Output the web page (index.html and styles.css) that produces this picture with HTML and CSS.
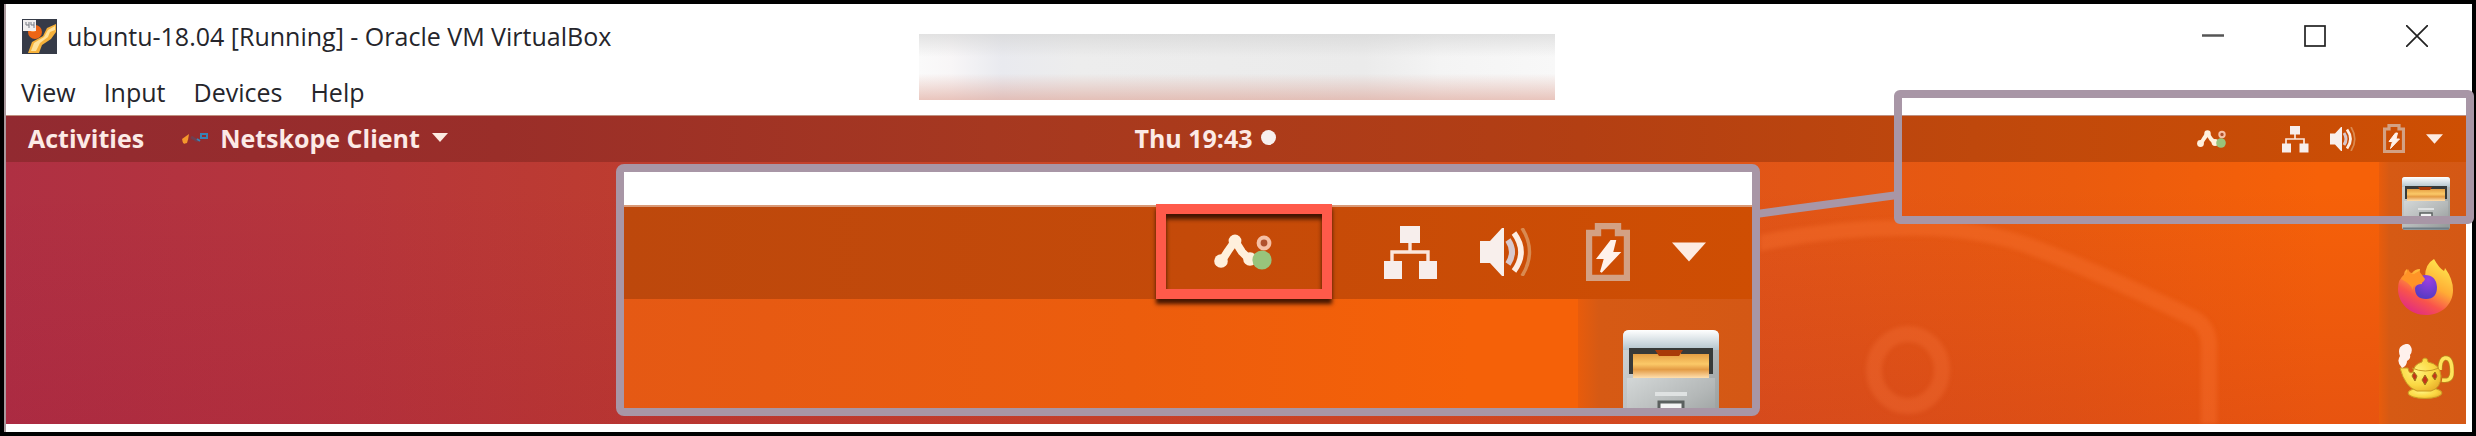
FILE: index.html
```html
<!DOCTYPE html>
<html lang="en">
<head>
<meta charset="utf-8">
<title>ubuntu-18.04 [Running] - Oracle VM VirtualBox</title>
<link rel="stylesheet" href="styles.css">
</head>
<body>
<svg class="defs" aria-hidden="true">
  <defs>
    <linearGradient id="metal" x1="0" y1="0" x2="1" y2="1">
      <stop offset="0" stop-color="#d3d7d7"/><stop offset=".55" stop-color="#b4b8b8"/><stop offset="1" stop-color="#929897"/>
    </linearGradient>
    <linearGradient id="lid" x1="0" y1="0" x2="0" y2="1">
      <stop offset="0" stop-color="#ffffff"/><stop offset="1" stop-color="#b3c4cc"/>
    </linearGradient>
    <linearGradient id="folder" x1="0" y1="0" x2="0" y2="1">
      <stop offset="0" stop-color="#dc8e35"/><stop offset=".5" stop-color="#fbc968"/><stop offset=".7" stop-color="#e39b45"/><stop offset="1" stop-color="#ffe0b0"/>
    </linearGradient>
    <linearGradient id="fox" x1=".8" y1=".1" x2=".3" y2="1">
      <stop offset="0" stop-color="#ffe04a"/><stop offset=".4" stop-color="#ffac35"/><stop offset=".7" stop-color="#f9544b"/><stop offset="1" stop-color="#e02b84"/>
    </linearGradient>
    <radialGradient id="globe" cx=".6" cy=".2" r=".8">
      <stop offset="0" stop-color="#9a3fe0"/><stop offset="1" stop-color="#563bc4"/>
    </radialGradient>
    <radialGradient id="gold" cx=".4" cy=".4" r=".7">
      <stop offset="0" stop-color="#fff27a"/><stop offset=".6" stop-color="#fbd843"/><stop offset="1" stop-color="#e9b02b"/>
    </radialGradient>
  </defs>
  <symbol id="i-client" viewBox="0 0 29 18">
    <path d="M3.500 14L7 8.500 10.500 3.500 14 9 18 13" fill="none" stroke="#fff0dc" stroke-width="4" stroke-linejoin="round" stroke-linecap="round"/>
    <circle cx="3.500" cy="13.500" r="3.400" fill="#fff0dc"/><circle cx="10.500" cy="3.500" r="3.200" fill="#fff0dc"/><circle cx="18" cy="12.500" r="3.400" fill="#fff0dc"/>
    <circle cx="25" cy="4.500" r="2.700" fill="#b0502c" stroke="#f6bfa4" stroke-width="2"/>
    <circle cx="24" cy="13" r="4.800" fill="#98c47c"/>
  </symbol>
  <symbol id="i-network" viewBox="0 0 28 28">
    <path d="M14 9v5M5 19v-5h18v5" fill="none" stroke="#fbe6dc" stroke-width="1.700"/>
    <path d="M9 1h10v8.500H9zM1 18.500h9v9H1zM18.500 18.500h9v9h-9z" fill="#f7eeec"/>
  </symbol>
  <symbol id="i-sound" viewBox="0 0 26 24">
    <path d="M0 6.500h5L11 0h1v24h-1l-6-6.500H0z" fill="#f8efec"/>
    <path d="M14 6q4 6 0 12" fill="none" stroke="#d8c8cc" stroke-width="3"/>
    <path d="M17 2.500q7 9.500 0 19" fill="none" stroke="#fdeee4" stroke-width="2.800"/>
    <path d="M21 0q7.500 12 0 24" fill="none" stroke="#d98a50" stroke-width="1.700"/>
  </symbol>
  <symbol id="i-battery" viewBox="0 0 22 29">
    <path d="M1.500 27.500V5H6V1.500h10V5h4.500v22.500z" fill="none" stroke="#d3a184" stroke-width="3.200"/>
    <path d="M12.500 9L6 17.500h3.500L7.500 24.500l9-9.500h-3.500L14.500 9z" fill="#fff1ea" stroke="#fff1ea"/>
  </symbol>
  <symbol id="i-caret" viewBox="0 0 18 10">
    <path d="M0 0h18L9 10z" fill="#fdebe2"/>
  </symbol>
  <symbol id="i-files" viewBox="0 0 48 53">
    <rect width="48" height="53" rx="3" fill="url(#metal)"/>
    <path d="M3 0h42q3 0 3 3v7H0V3q0-3 3-3z" fill="url(#lid)"/>
    <rect x="3" y="9" width="42" height="13" fill="#383a38"/>
    <path d="M5 12h13v-2h11v2h14v12H5z" fill="url(#folder)"/>
    <path d="M16 10h14l-2 3H18z" fill="#a83a08"/>
    <path d="M2 24h44v27H2z" fill="url(#metal)"/>
    <path d="M16 32h16" stroke="#dfe2e2" stroke-width="2"/>
    <rect x="18" y="36" width="12" height="8" fill="#f4f4f4" stroke="#5b605f" stroke-width="1.500"/>
    <path d="M1 51.500h46" stroke="#6f7d86" stroke-width="2"/>
  </symbol>
</svg>

<main class="window">
  <header class="titlebar">
    <svg class="app-logo" viewBox="0 0 35 35" aria-hidden="true">
      <rect width="35" height="35" fill="#363b48"/>
      <circle cx="13" cy="13" r="7" fill="#ec6515"/><circle cx="11" cy="10" r="3" fill="#ff9a4a"/>
      <path d="M34 5L25 9 21 17 10 23 6 34H17L20 26 29 20 34 13z" fill="#f6b13a"/>
      <path d="M33 7L26 11 22 18 12 24 9 32H14L18 24 26 18 28 13 33 11z" fill="#ffe19a"/>
      <rect x="1" y="1" width="13" height="11" fill="#f0eeee"/>
      <path d="M4 3v3h3M7 3v6M9 3v3h3M12 3v6" fill="none" stroke="#777b83"/>
    </svg>
    <h1 class="title">ubuntu-18.04 [Running] - Oracle VM VirtualBox</h1>
    <div class="window-controls">
      <button type="button" aria-label="Minimize"><svg viewBox="0 0 22 22"><path d="M0 10.500h22" stroke="#555" stroke-width="2.500"/></svg></button>
      <button type="button" aria-label="Maximize"><svg viewBox="0 0 22 22"><rect x="1" y="1" width="20" height="20" fill="none" stroke="#222" stroke-width="1.700"/></svg></button>
      <button type="button" aria-label="Close"><svg viewBox="0 0 22 22"><path d="M0 0l22 22M22 0L0 22" stroke="#222" stroke-width="1.700"/></svg></button>
    </div>
    <div class="redacted"></div>
  </header>

  <nav class="menubar">
    <button type="button">View</button>
    <button type="button">Input</button>
    <button type="button">Devices</button>
    <button type="button">Help</button>
  </nav>

  <section class="screen">
    <div class="panel">
      <div class="panel-left">
        <button type="button">Activities</button>
        <button type="button" class="app-menu">
          <svg class="app-icon" viewBox="0 0 26 12" aria-hidden="true"><path d="M0 7l7-5-1 6-4 4z" fill="#f5972c"/><circle cx="3" cy="9" r="2.500" fill="#f5972c"/><path d="M9 5l7 4" stroke="#713f50" stroke-width="3"/><path d="M15 7l3 2M19 2h6v4h-6z" fill="none" stroke="#3a83b4" stroke-width="2"/></svg>
          Netskope Client
          <svg class="app-caret" viewBox="0 0 18 10" aria-hidden="true"><use href="#i-caret"/></svg>
        </button>
      </div>
      <button type="button" class="clock">Thu 19:43<span class="dot"></span></button>
      <div class="tray">
        <button type="button" class="client" aria-label="Netskope Client"><svg><use href="#i-client"/></svg></button>
        <button type="button" class="network" aria-label="Network"><svg><use href="#i-network"/></svg></button>
        <button type="button" class="sound" aria-label="Volume"><svg><use href="#i-sound"/></svg></button>
        <button type="button" class="battery" aria-label="Battery"><svg><use href="#i-battery"/></svg></button>
        <button type="button" class="caret" aria-label="System menu"><svg><use href="#i-caret"/></svg></button>
      </div>
    </div>

    <div class="desktop">
      <svg class="wallpaper" viewBox="0 0 706 262" aria-hidden="true">
        <path d="M-4 82Q70 66 140 66Q220 64 280 88Q350 115 435 157Q449 166 449 184V270" fill="none" stroke="#fb7433" stroke-opacity=".38" stroke-width="16"/>
        <ellipse cx="148" cy="208" rx="34" ry="36" fill="none" stroke="#fb7a40" stroke-opacity=".28" stroke-width="16"/>
      </svg>
      <nav class="dock">
        <button type="button" aria-label="Files"><svg class="files"><use href="#i-files"/></svg></button>
        <button type="button" aria-label="Firefox">
          <svg class="dock-icon" viewBox="0 0 56 56">
            <path d="M36 0q5 9 10 12 1-2 1-3 8 11 8 22C55 46 43 56 28 56S0 45 0 30q0-10 6-14 0-4 3-6 1 4 5 4 3-4 8-4l-1 7 6 1q0-13 9-18z" fill="url(#fox)"/>
            <path d="M27 16q11 0 12 12 0 12-11 12T17 29q1-4 7-4 0-5-4-6 3-3 7-3z" fill="url(#globe)"/>
            <path d="M3 20q2-4 5-5l2-5q2 5 6 5l5-3 6 8q-1 4-7 5-6 1-5 6-2-6-12-11z" fill="#ff9427"/>
          </svg>
        </button>
        <button type="button" aria-label="Genie lamp">
          <svg class="dock-icon" viewBox="0 0 56 56">
            <path d="M44 36q10 2 10-8 0-15-7-14-5 1-5 12" fill="none" stroke="#b88a1d" stroke-width="5"/>
            <path d="M44 36q10 2 10-8 0-15-7-14-5 1-5 12" fill="none" stroke="#ffe45c" stroke-width="3.500"/>
            <ellipse cx="27" cy="49" rx="17" ry="5.500" fill="url(#gold)" stroke="#c99a25"/>
            <path d="M2 24l8 0q1 7 5 4 1-8 9-10 0-4 3-4t3 4q12 2 13 14 0 12-10 15H19Q7 43 2 24z" fill="url(#gold)" stroke="#c99a25"/>
            <path d="M14 24q13 6 27 0" fill="none" stroke="#c99a25"/>
            <path d="M16 28l3 4-2 5-3-5zM27 31l3 5-3 5-3-5zM37 28l2 4-2 4-3-4z" fill="#c6331a" stroke="#9d7719"/>
            <path d="M4 24Q-2 18 2 12-1 4 5 1q6-3 8 2 2 4-1 8 1 4-3 6 0 5-5 7z" fill="#fff1ec"/>
          </svg>
        </button>
      </nav>
    </div>
  </section>

  <svg class="connector" viewBox="0 0 134 36" aria-hidden="true"><path d="M-4 28L138 9" stroke="#a896a6" stroke-width="8"/></svg>
  <div class="source-frame"></div>

  <aside class="magnifier" aria-label="Enlarged system tray">
    <div class="panel">
      <div class="tray">
        <button type="button" class="client highlighted" aria-label="Netskope Client"><svg><use href="#i-client"/></svg></button>
        <button type="button" class="network" aria-label="Network"><svg><use href="#i-network"/></svg></button>
        <button type="button" class="sound" aria-label="Volume"><svg><use href="#i-sound"/></svg></button>
        <button type="button" class="battery" aria-label="Battery"><svg><use href="#i-battery"/></svg></button>
        <button type="button" class="caret" aria-label="System menu"><svg><use href="#i-caret"/></svg></button>
      </div>
    </div>
    <div class="magnified-desktop">
      <div class="dock"><button type="button" aria-label="Files"><svg class="files"><use href="#i-files"/></svg></button></div>
    </div>
  </aside>
</main>
</body>
</html>
```
FILE: styles.css
```css
:root {
  --u: 1px;
  --frame: #a896a6;
}

* {
  box-sizing: border-box;
}

body {
  margin: 0;
  padding: 4px;
  min-height: 100vh;
  display: flex;
  background: #000;
  font-family: "Open Sans", "Noto Sans", sans-serif;
  color: #25252b;
}

button {
  margin: 0;
  padding: 0;
  border: 0;
  background: none;
  color: inherit;
  font: inherit;
}

svg {
  display: block;
}

.defs {
  position: absolute;
  width: 0;
  height: 0;
}

.window {
  position: relative;
  flex: 1;
  display: flex;
  flex-direction: column;
  padding: 0 6px 8px 0;
  background: #fff;
  border-left: 2px solid #a9989c;
}

.titlebar {
  position: relative;
  display: flex;
  align-items: center;
  height: 78px;
  padding: 0 38px 14px 16px;
}

.app-logo {
  width: 35px;
  height: 35px;
}

.title {
  margin: 0 0 0 10px;
  font-size: 25px;
  font-weight: 400;
  line-height: 36px;
  white-space: nowrap;
}

.window-controls {
  display: flex;
  gap: 80px;
  margin-left: auto;
}

.window-controls svg {
  width: 22px;
  height: 22px;
}

.redacted {
  position: absolute;
  top: 30px;
  left: calc(50% - 318px);
  margin-left: 1px;
  width: 636px;
  height: 66px;
  background:
    linear-gradient(to bottom, rgba(210, 210, 210, .6), rgba(235, 235, 235, 0) 35%, rgba(225, 170, 155, 0) 60%, rgba(220, 155, 140, .55)),
    linear-gradient(to right, #fafafa, #f8f6f7 5%, #e9eaef 13%, #ededed 25%, #ebebeb 70%, #f4f4f4 82%, #f8f8f8);
}

.menubar {
  display: flex;
  gap: 28px;
  height: 33px;
  padding-left: 15px;
  font-size: 25px;
  line-height: 20px;
}

.menubar button {
  height: 20px;
}

.screen {
  flex: 1;
  display: flex;
  flex-direction: column;
}

.panel {
  display: grid;
  grid-template-columns: 1fr auto 1fr;
  align-items: center;
  height: calc(var(--u) * 47);
  background: linear-gradient(to right, #922a31, #9a2e29 20%, #a63820 40%, #b33f13 64%, #bf480c 80%, #ce4f03);
  box-shadow: inset 0 1px #c09080;
  color: #fceae6;
  font-size: 25px;
  font-weight: 700;
  line-height: 32px;
}

.panel-left {
  display: flex;
  gap: 38px;
  padding: 0 0 2px 22px;
}

.app-menu {
  display: flex;
  align-items: center;
  gap: 12px;
}

.app-icon {
  width: 26px;
  height: 12px;
}

.app-caret {
  width: 16px;
  height: 9px;
}

.clock {
  display: flex;
  align-items: center;
  gap: 8px;
  padding: 0 62px 2px 0;
}

.dot {
  width: 15px;
  height: 15px;
  border-radius: 50%;
  background: #f7f0ee;
}

.tray {
  display: flex;
  align-items: center;
  justify-content: flex-end;
  padding-right: calc(var(--u) * 23);
}

.tray svg {
  width: 100%;
  height: 100%;
}

.client {
  position: relative;
  width: calc(var(--u) * 29);
  height: calc(var(--u) * 18);
  margin-right: calc(var(--u) * 55);
}

.network {
  width: calc(var(--u) * 28);
  height: calc(var(--u) * 28);
  margin-right: calc(var(--u) * 21);
}

.sound {
  width: calc(var(--u) * 26);
  height: calc(var(--u) * 24);
  margin-right: calc(var(--u) * 27);
}

.battery {
  width: calc(var(--u) * 22);
  height: calc(var(--u) * 29);
  margin-right: calc(var(--u) * 21);
}

.caret {
  width: calc(var(--u) * 17);
  height: calc(var(--u) * 10);
}

.desktop {
  position: relative;
  flex: 1;
  display: flex;
  justify-content: flex-end;
  overflow: hidden;
  background:
    linear-gradient(to bottom, rgba(150, 10, 60, 0) 10%, rgba(150, 10, 60, .15)),
    linear-gradient(to right, #af3043, #b7363b 14%, #bd3c30 25%, #cd4826 45%, #df5419 68%, #ea5b0e 84%, #f66108 94%);
}

.wallpaper {
  position: absolute;
  top: 0;
  right: 0;
  width: 706px;
  height: 262px;
  filter: blur(2px);
}

.dock {
  position: relative;
  display: flex;
  flex-direction: column;
  align-items: center;
  gap: 29px;
  width: calc(var(--u) * 87);
  padding: calc(var(--u) * 15) 0 0 calc(var(--u) * 6);
  background: linear-gradient(to right, #e85c0c, #d65a14 12%, #d45815);
}

.files {
  width: calc(var(--u) * 48);
  height: calc(var(--u) * 53);
}

.dock-icon {
  width: 56px;
  height: 56px;
}

.source-frame {
  position: absolute;
  top: 86px;
  right: -2px;
  width: 580px;
  height: 134px;
  border: 8px solid var(--frame);
  border-radius: 6px;
}

.connector {
  position: absolute;
  top: 182px;
  right: 578px;
  width: 134px;
  height: 36px;
}

.magnifier {
  --u: 2px;
  position: absolute;
  top: 160px;
  right: 712px;
  width: 1144px;
  height: 252px;
  display: flex;
  flex-direction: column;
  padding-top: 33px;
  overflow: hidden;
  border: 8px solid var(--frame);
  border-radius: 8px;
  background: #fff;
}

.magnifier .panel {
  display: block;
  flex: none;
  padding-top: 18px;
  background: linear-gradient(to right, #bd480c, #c44a09 50%, #cf4e03);
  box-shadow: inset 0 2px #d99a78;
}

.magnified-desktop {
  flex: 1;
  min-height: 0;
  display: flex;
  justify-content: flex-end;
  overflow: hidden;
  background: linear-gradient(to right, #e55914, #ec5d0d 45%, #f56108 75%);
}

.magnifier .dock {
  padding-top: 31px;
}

.highlighted::after {
  content: "";
  position: absolute;
  inset: -30px -60px -29px -58px;
  border: 10px solid #ff5a4a;
  box-shadow: 0 5px 4px rgba(40, 10, 0, .85), inset 0 5px 4px rgba(40, 10, 0, .85);
}
```
